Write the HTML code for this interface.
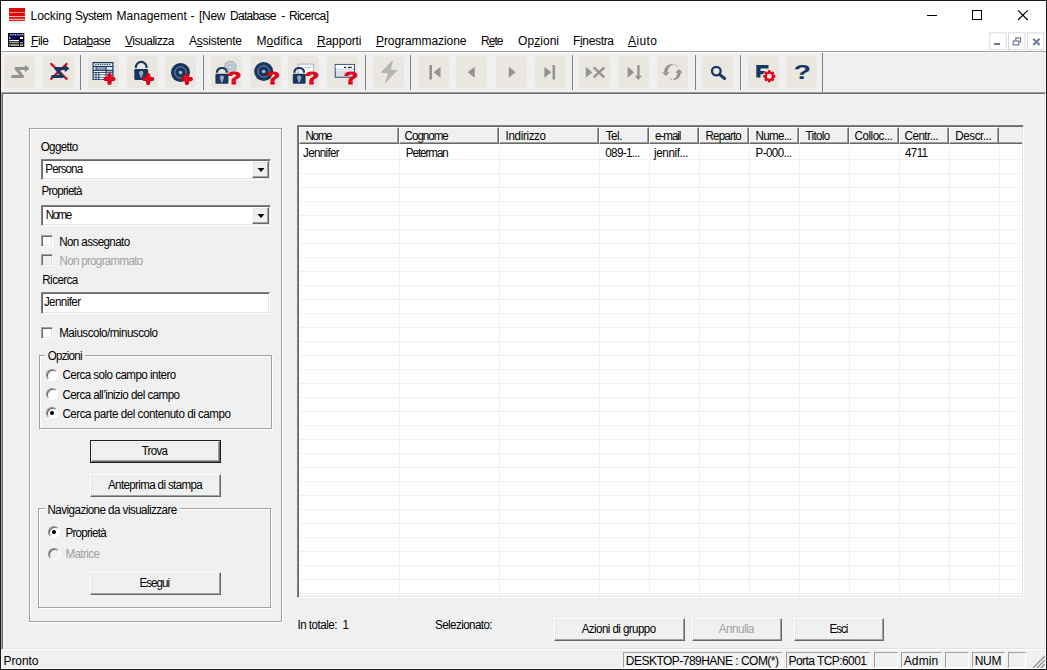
<!DOCTYPE html>
<html><head><meta charset="utf-8">
<style>
*{box-sizing:border-box;margin:0;padding:0}
html,body{width:1047px;height:670px;overflow:hidden;background:#fff}
body{position:relative;font-family:"Liberation Sans",sans-serif;font-size:11px;color:#000}
.a{position:absolute;white-space:pre}
#frame{left:0;top:0;width:1047px;height:670px;border:1px solid #1a1a1a}
u{text-decoration:underline;text-underline-offset:1px}
#tbar{left:1px;top:51px;width:1045px;height:42px;background:#f0f0f0;border-top:1px solid #a0a0a0;box-shadow:inset 0 1px 0 #fafafa}
#tbar2{left:1px;top:53px;width:822px;height:39px;border-right:1px solid #808080}
.tb{top:56px;width:31px;height:32px;background:#e9e7e0;border-radius:4px}
.tb svg{position:absolute;left:0;top:0}
.sep{top:55px;width:1px;height:35px;background:#808080}
#client{left:1px;top:92px;width:1045px;height:558px;background:#f0f0f0;border:1px solid;border-color:#a0a0a0 #fff #fff #a0a0a0;box-shadow:inset 1px 1px 0 #696969,inset -1px -1px 0 #e3e3e3,inset 2px 2px 0 #f8f8f8}
#status{left:1px;top:650px;width:1045px;height:19px;background:#f0f0f0;border-right:1px solid #fff;border-bottom:1px solid #fff}
.grp{border:1px solid #a0a0a0;box-shadow:inset 1px 1px 0 #fff, 1px 1px 0 #fff}
.lblbg{background:#f0f0f0;height:12px}
.sunk{background:#fff;border:1px solid;border-color:#808080 #fff #fff #808080;box-shadow:inset 1px 1px 0 #696969, inset -1px -1px 0 #e3e3e3}
.btn{background:#f0f0f0;border:1px solid;border-color:#fff #696969 #696969 #fff;box-shadow:inset -1px -1px 0 #a0a0a0, inset 1px 1px 0 #e3e3e3}
.chk{width:12px;height:12px;background:#fff;border:1px solid;border-color:#a0a0a0 #fff #fff #a0a0a0;box-shadow:inset 1px 1px 0 #696969, inset -1px -1px 0 #e3e3e3}
.rad{width:11.5px;height:11.5px;border-radius:50%;background:#fff;border:1px solid;border-color:#909090 #fff #fff #909090;box-shadow:inset 1px 1px 0 #696969;transform:rotate(0deg)}
.dot{width:4px;height:4px;border-radius:50%;background:#000}
.sp{top:652px;height:16px;border:1px solid;border-color:#a0a0a0 #fff #fff #a0a0a0}
.hd{top:127px;height:17px;background:#f0f0f0;border:1px solid;border-color:#fff #696969 #696969 #fff;box-shadow:inset -1px -1px 0 #a0a0a0}
</style></head><body>
<div class="a" id="frame"></div>

<svg class="a" style="left:9px;top:8px" width="16" height="13" viewBox="0 0 16 13"><g fill="#de0a0a"><rect x="0" y="0" width="16" height="4.400"/><rect x="0" y="5" width="16" height="3"/><rect x="0" y="8.700" width="16" height="2.100"/><rect x="0" y="11.600" width="16" height="1.300"/></g></svg>
<div class="a" id="title" style="left:30px;top:9px;width:300px;height:14px;font-size:12px;line-height:14px"><span style="position:absolute;left:0.6px;top:0;letter-spacing:-0.063px">Locking </span><span style="position:absolute;left:45.0px;top:0;letter-spacing:-0.543px">System </span><span style="position:absolute;left:86.5px;top:0;letter-spacing:0.028px">Management </span><span style="position:absolute;left:160.6px;top:0;letter-spacing:0.000px">- </span><span style="position:absolute;left:169.1px;top:0;letter-spacing:-0.315px">[New </span><span style="position:absolute;left:200.0px;top:0;letter-spacing:-0.696px">Database </span><span style="position:absolute;left:251.2px;top:0;letter-spacing:0.000px">- </span><span style="position:absolute;left:258.9px;top:0;letter-spacing:-0.559px">Ricerca]</span></div>
<svg class="a" style="left:925px;top:9px" width="110" height="14" viewBox="0 0 110 14"><path d="M2 6.500H12" stroke="#000" stroke-width="1" fill="none"/><rect x="47.500" y="1.500" width="9" height="9" stroke="#000" fill="none"/><path d="M93 1.300L102.700 11M102.700 1.300L93 11" stroke="#000" stroke-width="1.100" fill="none"/></svg>
<svg class="a" style="left:8px;top:33px" width="17" height="14" viewBox="0 0 17 14"><rect x="0" y="0" width="16.300" height="14" fill="#0a0a0a"/><rect x="1" y="1" width="14.300" height="1.300" fill="#fff"/><path d="M1 1.600H15.300" stroke="#1414c8" stroke-width="1.300" stroke-dasharray="1.500 0.800"/><rect x="1.300" y="4" width="1" height="2" fill="#fff"/><rect x="3" y="4" width="8" height="2" fill="#00008b"/><rect x="12" y="4" width="3" height="2" fill="#fff"/><rect x="1.300" y="7" width="9.700" height="1.200" fill="#fff"/><rect x="12" y="7" width="3" height="1.200" fill="#00008b"/><rect x="1.300" y="9.200" width="9.700" height="1" fill="#c8c8c8"/><rect x="12" y="9.200" width="3" height="1" fill="#c8c8c8"/><rect x="1.300" y="11.200" width="1" height="1.800" fill="#fff"/><rect x="3" y="11.200" width="8" height="1.800" fill="#a8a8a8"/><rect x="12" y="11.200" width="3" height="1.800" fill="#a8a8a8"/></svg>
<div class="a" style="left:31.0px;top:34px;font-size:12px;line-height:14px;letter-spacing:-0.448px;"><u>F</u>ile</div>
<div class="a" style="left:63.0px;top:34px;font-size:12px;line-height:14px;letter-spacing:-0.482px;">Data<u>b</u>ase</div>
<div class="a" style="left:125.0px;top:34px;font-size:12px;line-height:14px;letter-spacing:-0.479px;"><u>V</u>isualizza</div>
<div class="a" style="left:189.0px;top:34px;font-size:12px;line-height:14px;letter-spacing:-0.262px;">A<u>s</u>sistente</div>
<div class="a" style="left:256.4px;top:34px;font-size:12px;line-height:14px;letter-spacing:0.173px;">M<u>o</u>difica</div>
<div class="a" style="left:317.0px;top:34px;font-size:12px;line-height:14px;letter-spacing:-0.123px;"><u>R</u>apporti</div>
<div class="a" style="left:376.0px;top:34px;font-size:12px;line-height:14px;letter-spacing:-0.067px;"><u>P</u>rogrammazione</div>
<div class="a" style="left:481.0px;top:34px;font-size:12px;line-height:14px;letter-spacing:-0.953px;">R<u>e</u>te</div>
<div class="a" style="left:518.0px;top:34px;font-size:12px;line-height:14px;letter-spacing:0.052px;">Op<u>z</u>ioni</div>
<div class="a" style="left:573.0px;top:34px;font-size:12px;line-height:14px;letter-spacing:-0.337px;">F<u>i</u>nestra</div>
<div class="a" style="left:628.0px;top:34px;font-size:12px;line-height:14px;letter-spacing:0.410px;"><u>A</u>iuto</div>
<svg class="a" style="left:989px;top:32px" width="57" height="19" viewBox="0 0 57 19"><g fill="#fff" stroke="#dadada" stroke-width="1"><rect x="0.800" y="0.800" width="16.500" height="16.800"/><rect x="19.500" y="0.800" width="16.500" height="16.800"/><rect x="38.300" y="0.800" width="16.500" height="16.800"/></g><path d="M5 12H11" stroke="#6d7c92" stroke-width="2"/><g fill="none" stroke="#6d7c92" stroke-width="1.200"><rect x="24.300" y="9" width="5.600" height="3.800"/><path d="M26.800 8.500V5.900H31.600V10H30.300"/></g><path d="M44.200 6.800L50.600 13M50.600 6.800L44.200 13" stroke="#6d7c92" stroke-width="2"/></svg>
<div class="a" id="tbar"></div><div class="a" id="tbar2"></div>
<div class="a tb" style="left:4px"><svg width="32" height="32" viewBox="0 0 32 32"><path d="M8.5 20.500H18.5L12 12.500H22" stroke="#939391" stroke-width="3" stroke-linecap="round" stroke-linejoin="round" fill="none"/><path d="M20.8 8.800L25.6 12.500L20.8 16.200Z" fill="#939391"/></svg></div>
<div class="a tb" style="left:42.8px"><svg width="32" height="32" viewBox="0 0 32 32"><path d="M7.500 7.300L24.300 23.500M24.300 7.300L7.500 23.500" stroke="#e2001a" stroke-width="2.200" fill="none"/><path d="M9.5 20.500H19.5L13 12.500H23" stroke="#17375e" stroke-width="3" stroke-linecap="round" stroke-linejoin="round" fill="none"/><path d="M21.8 8.800L26.6 12.500L21.8 16.200Z" fill="#17375e"/></svg></div>
<div class="a tb" style="left:87.6px"><svg width="32" height="32" viewBox="0 0 32 32"><rect x="4.500" y="6" width="21" height="18" fill="#17375e"/><rect x="5.700" y="7.300" width="18.600" height="2.600" fill="#fff"/><path d="M7 8.600H23" stroke="#17375e" stroke-width="0.900" stroke-dasharray="1.600 0.700"/><rect x="5.700" y="11" width="1.800" height="2.800" fill="#fff"/><rect x="8.500" y="11" width="9" height="2.800" fill="#8f9bb8"/><rect x="18.600" y="11" width="5.700" height="2.800" fill="#e4e6ee"/><rect x="5.700" y="14.900" width="11.800" height="1" fill="#fff"/><rect x="18.600" y="14.900" width="5.700" height="1" fill="#b9c0d2"/><rect x="5.700" y="16.800" width="1.800" height="1.700" fill="#fff"/><rect x="8.500" y="16.800" width="1.800" height="1.700" fill="#fff"/><rect x="11.300" y="16.800" width="6.200" height="1.700" fill="#fff"/><rect x="18.600" y="16.800" width="5.700" height="1.700" fill="#fff"/><rect x="5.700" y="19.200" width="1.800" height="1.700" fill="#fff"/><rect x="8.500" y="19.200" width="1.800" height="1.700" fill="#fff"/><rect x="11.300" y="19.200" width="6.200" height="1.700" fill="#fff"/><rect x="18.600" y="19.200" width="5.700" height="1.700" fill="#fff"/><rect x="5.700" y="21.600" width="1.800" height="1.600" fill="#fff"/><rect x="8.500" y="21.600" width="1.800" height="1.600" fill="#fff"/><rect x="11.300" y="21.600" width="6.200" height="1.600" fill="#fff"/><path d="M17.6 23H25.4M21.5 19.1V26.9" stroke="#b40016" stroke-width="4.200" stroke-linecap="round" fill="none"/><path d="M17.6 23H25.4M21.5 19.1V26.9" stroke="#e2001a" stroke-width="3.300" stroke-linecap="round" fill="none"/></svg></div>
<div class="a tb" style="left:126.7px"><svg width="32" height="32" viewBox="0 0 32 32"><path d="M8.85 12.00V11.20A5.35 5.35 0 0 1 19.55 11.20V12.00" stroke="#17375e" stroke-width="2.1" fill="none"/><rect x="7.3" y="13" width="13.80" height="10.90" rx="1.2" fill="#17375e"/><circle cx="14.20" cy="17" r="2.2" fill="#9aa7c0"/><path d="M13.00 18H15.40L15.20 21.4H13.20Z" fill="#9aa7c0"/><path d="M17.3 23H25.099999999999998M21.2 19.1V26.9" stroke="#b40016" stroke-width="4.200" stroke-linecap="round" fill="none"/><path d="M17.3 23H25.099999999999998M21.2 19.1V26.9" stroke="#e2001a" stroke-width="3.300" stroke-linecap="round" fill="none"/></svg></div>
<div class="a tb" style="left:165px"><svg width="32" height="32" viewBox="0 0 32 32"><circle cx="15.5" cy="16.5" r="9.5" fill="#17375e"/><circle cx="15.5" cy="16.5" r="5.70" fill="none" stroke="#8fa3c4" stroke-width="0.8"/><circle cx="15.5" cy="16.5" r="1.80" fill="#a9b4cc"/><path d="M18.0 23.1H25.799999999999997M21.9 19.200000000000003V27.0" stroke="#b40016" stroke-width="4.200" stroke-linecap="round" fill="none"/><path d="M18.0 23.1H25.799999999999997M21.9 19.200000000000003V27.0" stroke="#e2001a" stroke-width="3.300" stroke-linecap="round" fill="none"/></svg></div>
<div class="a tb" style="left:210.5px"><svg width="32" height="32" viewBox="0 0 32 32"><circle cx="19.3" cy="10.9" r="6.5" fill="#b6bdc7"/><circle cx="19.3" cy="10.9" r="3.90" fill="none" stroke="#dde0e5" stroke-width="0.8"/><circle cx="19.3" cy="10.9" r="1.24" fill="#dde0e5"/><path d="M6.00 16.80V16.00A4.90 4.00 0 0 1 15.80 16.00V16.80" stroke="#17375e" stroke-width="2.2" fill="none"/><rect x="4.4" y="17.8" width="13.00" height="9.90" rx="1.2" fill="#17375e"/><circle cx="10.90" cy="21.8" r="2.2" fill="#9aa7c0"/><path d="M9.70 22.8H12.10L11.90 26.200000000000003H9.90Z" fill="#9aa7c0"/><text x="0" y="0" transform="translate(16.3 27.6) scale(1.32 1)" font-family="Liberation Sans, sans-serif" font-weight="bold" font-size="17.4" fill="#e2001a" stroke="#e2001a" stroke-width="0.9">?</text></svg></div>
<div class="a tb" style="left:249.7px"><svg width="32" height="32" viewBox="0 0 32 32"><circle cx="13.7" cy="15.5" r="9.5" fill="#17375e"/><circle cx="13.7" cy="15.5" r="5.70" fill="none" stroke="#8fa3c4" stroke-width="0.8"/><circle cx="13.7" cy="15.5" r="1.80" fill="#a9b4cc"/><text x="0" y="0" transform="translate(16.1 27.6) scale(1.32 1)" font-family="Liberation Sans, sans-serif" font-weight="bold" font-size="17.4" fill="#e2001a" stroke="#e2001a" stroke-width="0.9">?</text></svg></div>
<div class="a tb" style="left:288.2px"><svg width="32" height="32" viewBox="0 0 32 32"><rect x="10.200" y="8.100" width="15.500" height="11" fill="#f6f6f6" stroke="#8fa3c8" stroke-width="0.800"/><path d="M17 11.500H18M19 11.500H22.500" stroke="#8fa3c8" stroke-width="0.800"/><path d="M6.40 16.80V16.00A4.80 4.00 0 0 1 16.00 16.00V16.80" stroke="#17375e" stroke-width="2.2" fill="none"/><rect x="4.8" y="17.8" width="12.80" height="9.90" rx="1.2" fill="#17375e"/><circle cx="11.20" cy="21.8" r="2.2" fill="#9aa7c0"/><path d="M10.00 22.8H12.40L12.20 26.200000000000003H10.20Z" fill="#9aa7c0"/><text x="0" y="0" transform="translate(17.0 27.6) scale(1.32 1)" font-family="Liberation Sans, sans-serif" font-weight="bold" font-size="17.4" fill="#e2001a" stroke="#e2001a" stroke-width="0.9">?</text></svg></div>
<div class="a tb" style="left:327.2px"><svg width="32" height="32" viewBox="0 0 32 32"><rect x="8.200" y="8.400" width="19.200" height="12.800" fill="#d9dfea" stroke="#17375e" stroke-width="0.900"/><rect x="8.700" y="8.900" width="18.200" height="3.400" fill="#fff"/><rect x="8.700" y="14" width="18.200" height="0.800" fill="#eef1f6"/><path d="M17 11.400H19.200M21 11.400H24.600" stroke="#111" stroke-width="1.200"/><text x="0" y="0" transform="translate(16.9 27.6) scale(1.32 1)" font-family="Liberation Sans, sans-serif" font-weight="bold" font-size="17.4" fill="#e2001a" stroke="#e2001a" stroke-width="0.9">?</text></svg></div>
<div class="a tb" style="left:372.5px"><svg width="32" height="32" viewBox="0 0 32 32"><path d="M20.200 3.600L7.500 16.500L15 17.500L11.800 27.700L24.500 14.300L17.800 13.500Z" fill="#b4b4b2"/></svg></div>
<div class="a tb" style="left:417.6px"><svg width="32" height="32" viewBox="0 0 32 32"><rect x="11.400" y="9" width="2.600" height="14.500" fill="#939391"/><path d="M15.7 16.200L22.5 10.700V21.700Z" fill="#939391"/></svg></div>
<div class="a tb" style="left:456.3px"><svg width="32" height="32" viewBox="0 0 32 32"><path d="M11.5 16.200L18.7 10.700V21.700Z" fill="#939391"/></svg></div>
<div class="a tb" style="left:495.5px"><svg width="32" height="32" viewBox="0 0 32 32"><path d="M19.6 16.200L12.8 10.700V21.700Z" fill="#939391"/></svg></div>
<div class="a tb" style="left:534.8px"><svg width="32" height="32" viewBox="0 0 32 32"><path d="M16.3 16.200L9.4 10.700V21.700Z" fill="#939391"/><rect x="17.500" y="9" width="2.600" height="14.500" fill="#939391"/></svg></div>
<div class="a tb" style="left:579.4px"><svg width="32" height="32" viewBox="0 0 32 32"><path d="M13.3 16.200L6.8 10.700V21.700Z" fill="#939391"/><path d="M14.800 11.300L25.300 21.300M25.300 11.300L14.800 21.300" stroke="#939391" stroke-width="2.300" fill="none"/></svg></div>
<div class="a tb" style="left:618.4px"><svg width="32" height="32" viewBox="0 0 32 32"><path d="M16.2 16.200L9.7 10.700V21.700Z" fill="#939391"/><rect x="19.300" y="9" width="2.300" height="12" fill="#939391"/><path d="M16.600 19.800H24.000L20.300 24Z" fill="#939391"/></svg></div>
<div class="a tb" style="left:657.2px"><svg width="32" height="32" viewBox="0 0 32 32"><path d="M16 8C10.500 8 7.200 11.500 7.200 16.400H10.600C10.600 12.600 12.500 9.600 16 9.100Z" fill="#939391"/><path d="M5.200 16.200H12.600L8.900 19.900Z" fill="#939391"/><path d="M16.300 23.900C21.500 23.900 23.900 20.500 23.700 16.600H20.300C20.300 20 19 22.300 16.300 22.900Z" fill="#939391"/><path d="M18.300 16.800H25.700L22 13Z" fill="#939391"/><path d="M17 8.300C19 8.600 20.300 9.600 21 11" stroke="#939391" stroke-width="1" stroke-dasharray="1 1" fill="none"/><path d="M15 23.500C13.500 23.200 12.300 22.300 11.600 21.200" stroke="#939391" stroke-width="1" stroke-dasharray="1 1" fill="none"/></svg></div>
<div class="a tb" style="left:702.2px"><svg width="32" height="32" viewBox="0 0 32 32"><circle cx="14.300" cy="15.100" r="4.300" fill="none" stroke="#17375e" stroke-width="2.300"/><path d="M17.800 18.600L22.600 22.500" stroke="#17375e" stroke-width="3" stroke-linecap="round"/></svg></div>
<div class="a tb" style="left:747.8px"><svg width="32" height="32" viewBox="0 0 32 32"><path d="M8.300 9H20.500V12.600H12.500V15H17.200V18.300H12.500V21.600H8.300Z" fill="#17375e"/><circle cx="21.300" cy="20.300" r="6.600" fill="#e9e7e0"/><path d="M27.25 18.97L27.25 21.63L25.18 21.90L25.18 21.92L26.45 23.57L24.57 25.45L22.92 24.18L22.90 24.18L22.63 26.25L19.97 26.25L19.70 24.18L19.68 24.18L18.03 25.45L16.15 23.57L17.42 21.92L17.42 21.90L15.35 21.63L15.35 18.97L17.42 18.70L17.42 18.68L16.15 17.03L18.03 15.15L19.68 16.42L19.70 16.42L19.97 14.35L22.63 14.35L22.90 16.42L22.92 16.42L24.57 15.15L26.45 17.03L25.18 18.68L25.18 18.70ZM23.8 20.3A2.5 2.5 0 1 0 18.8 20.3A2.5 2.5 0 1 0 23.8 20.3Z" fill="#e2001a" fill-rule="evenodd"/></svg></div>
<div class="a tb" style="left:786.4px"><svg width="32" height="32" viewBox="0 0 32 32"><text x="0" y="0" transform="translate(7.6 23.1) scale(1.46 1)" font-family="Liberation Sans, sans-serif" font-weight="bold" font-size="19.6" fill="#17375e" stroke="#17375e" stroke-width="0">?</text></svg></div>
<div class="a sep" style="left:80px"></div>
<div class="a sep" style="left:203px"></div>
<div class="a sep" style="left:365px"></div>
<div class="a sep" style="left:410px"></div>
<div class="a sep" style="left:572px"></div>
<div class="a sep" style="left:695px"></div>
<div class="a sep" style="left:740px"></div>
<div class="a" id="client"></div>
<div class="a grp" style="left:29px;top:128px;width:253px;height:494px"></div>
<div class="a" style="left:40.7px;top:140px;font-size:11.6px;line-height:14px;letter-spacing:-0.611px;transform:scaleY(1.07);transform-origin:0 10.6px;">Oggetto</div>
<div class="a sunk" style="left:41px;top:159px;width:230px;height:21px"></div>
<div class="a btn" style="left:252px;top:161px;width:17px;height:17px"></div>
<svg class="a" style="left:256.500px;top:167.5px" width="8" height="4" viewBox="0 0 8 4"><path d="M0.500 0H7.500L4 4Z" fill="#000"/></svg>
<div class="a" style="left:45.3px;top:162px;font-size:11.6px;line-height:14px;letter-spacing:-0.898px;transform:scaleY(1.07);transform-origin:0 11.5px;">Persona</div>
<div class="a" style="left:41.5px;top:184px;font-size:11.6px;line-height:14px;letter-spacing:-0.756px;transform:scaleY(1.07);transform-origin:0 11.5px;">Proprietà</div>
<div class="a sunk" style="left:41px;top:205px;width:230px;height:21px"></div>
<div class="a btn" style="left:252px;top:207px;width:17px;height:17px"></div>
<svg class="a" style="left:256.500px;top:213.5px" width="8" height="4" viewBox="0 0 8 4"><path d="M0.500 0H7.500L4 4Z" fill="#000"/></svg>
<div class="a" style="left:45.8px;top:208px;font-size:11.6px;line-height:14px;letter-spacing:-1.512px;transform:scaleY(1.07);transform-origin:0 11.4px;">Nome</div>
<div class="a chk" style="left:41px;top:235px"></div>
<div class="a" style="left:59.2px;top:235px;font-size:11.6px;line-height:14px;letter-spacing:-0.583px;transform:scaleY(1.07);transform-origin:0 10.8px;">Non assegnato</div>
<div class="a chk" style="left:41px;top:254px;background:#f0f0f0"></div>
<div class="a" style="left:59.5px;top:254px;font-size:11.6px;line-height:14px;letter-spacing:-0.696px;color:#a0a0a0;transform:scaleY(1.07);transform-origin:0 10.9px;">Non programmato</div>
<div class="a" style="left:42.3px;top:273px;font-size:11.6px;line-height:14px;letter-spacing:-0.552px;transform:scaleY(1.07);transform-origin:0 10.6px;">Ricerca</div>
<div class="a sunk" style="left:41px;top:292px;width:229px;height:22px"></div>
<div class="a" style="left:43.9px;top:295px;font-size:11.6px;line-height:14px;letter-spacing:-0.579px;transform:scaleY(1.07);transform-origin:0 11.0px;">Jennifer</div>
<div class="a chk" style="left:41px;top:327px"></div>
<div class="a" style="left:59.2px;top:326px;font-size:11.6px;line-height:14px;letter-spacing:-0.490px;transform:scaleY(1.07);transform-origin:0 11.0px;">Maiuscolo/minuscolo</div>
<div class="a grp" style="left:39px;top:355px;width:233px;height:74px"></div>
<div class="a lblbg" style="left:45px;top:350px;width:40px"></div>
<div class="a" style="left:47.7px;top:349px;font-size:11.6px;line-height:14px;letter-spacing:-0.735px;transform:scaleY(1.07);transform-origin:0 10.7px;">Opzioni</div>
<div class="a rad" style="left:46px;top:369px"></div>
<div class="a" style="left:62.4px;top:368px;font-size:11.6px;line-height:14px;letter-spacing:-0.535px;transform:scaleY(1.07);transform-origin:0 10.8px;">Cerca solo campo intero</div>
<div class="a rad" style="left:46px;top:388px"></div>
<div class="a" style="left:62.4px;top:388px;font-size:11.6px;line-height:14px;letter-spacing:-0.555px;transform:scaleY(1.07);transform-origin:0 11.0px;">Cerca all’inizio del campo</div>
<div class="a rad" style="left:46px;top:407px"></div>
<div class="a" style="left:62.4px;top:407px;font-size:11.6px;line-height:14px;letter-spacing:-0.457px;transform:scaleY(1.07);transform-origin:0 10.7px;">Cerca parte del contenuto di campo</div>
<div class="a dot" style="left:50px;top:411px"></div>
<div class="a" style="left:90px;top:440px;width:131px;height:23px;border:1px solid #1c1c1c"></div><div class="a btn" style="left:91px;top:441px;width:129px;height:21px"></div>
<div class="a" style="left:141.7px;top:444px;font-size:11.6px;line-height:14px;letter-spacing:-0.730px;transform:scaleY(1.07);transform-origin:0 10.6px;">Trova</div>
<div class="a btn" style="left:90px;top:474px;width:131px;height:23px"></div>
<div class="a" style="left:108.0px;top:478px;font-size:11.6px;line-height:14px;letter-spacing:-0.646px;transform:scaleY(1.07);transform-origin:0 11.1px;">Anteprima di stampa</div>
<div class="a grp" style="left:38px;top:508px;width:233px;height:100px"></div>
<div class="a lblbg" style="left:45px;top:504px;width:135px"></div>
<div class="a" style="left:47.5px;top:503px;font-size:11.6px;line-height:14px;letter-spacing:-0.535px;transform:scaleY(1.07);transform-origin:0 10.6px;">Navigazione da visualizzare</div>
<div class="a rad" style="left:48px;top:526px"></div><div class="a dot" style="left:52px;top:530px"></div>
<div class="a" style="left:65.4px;top:526px;font-size:11.6px;line-height:14px;letter-spacing:-0.731px;transform:scaleY(1.07);transform-origin:0 10.6px;">Proprietà</div>
<div class="a rad" style="left:48px;top:548px;background:#f0f0f0"></div>
<div class="a" style="left:65.4px;top:547px;font-size:11.6px;line-height:14px;letter-spacing:-0.569px;color:#a0a0a0;transform:scaleY(1.07);transform-origin:0 11.4px;">Matrice</div>
<div class="a btn" style="left:90px;top:572px;width:131px;height:23px"></div>
<div class="a" style="left:139.4px;top:576px;font-size:11.6px;line-height:14px;letter-spacing:-0.951px;transform:scaleY(1.07);transform-origin:0 10.7px;">Esegui</div>
<div class="a sunk" style="left:297px;top:125px;width:727px;height:473px"></div>
<div class="a" style="left:299px;top:127px;width:723px;height:17px;background:#f0f0f0;border-bottom:1px solid #696969;box-shadow:inset 0 -2px 0 -1px #a0a0a0"></div>
<div class="a" style="left:299px;top:146px;width:723px;height:450px;background:linear-gradient(#f0f0f0,#f0f0f0) 100px 0/1px 100% no-repeat,linear-gradient(#f0f0f0,#f0f0f0) 200px 0/1px 100% no-repeat,linear-gradient(#f0f0f0,#f0f0f0) 300px 0/1px 100% no-repeat,linear-gradient(#f0f0f0,#f0f0f0) 350px 0/1px 100% no-repeat,linear-gradient(#f0f0f0,#f0f0f0) 400px 0/1px 100% no-repeat,linear-gradient(#f0f0f0,#f0f0f0) 450px 0/1px 100% no-repeat,linear-gradient(#f0f0f0,#f0f0f0) 500px 0/1px 100% no-repeat,linear-gradient(#f0f0f0,#f0f0f0) 550px 0/1px 100% no-repeat,linear-gradient(#f0f0f0,#f0f0f0) 600px 0/1px 100% no-repeat,linear-gradient(#f0f0f0,#f0f0f0) 650px 0/1px 100% no-repeat,linear-gradient(#f0f0f0,#f0f0f0) 700px 0/1px 100% no-repeat,repeating-linear-gradient(to bottom,transparent 0,transparent 13px,#f0f0f0 13px,#f0f0f0 14px);"></div>
<div class="a hd" style="left:299px;width:100px"></div>
<div class="a" style="left:305.5px;top:129px;font-size:11.6px;line-height:14px;letter-spacing:-1.312px;transform:scaleY(1.07);transform-origin:0 10.6px;">Nome</div>
<div class="a hd" style="left:399px;width:100px"></div>
<div class="a" style="left:404.6px;top:129px;font-size:11.6px;line-height:14px;letter-spacing:-1.014px;transform:scaleY(1.07);transform-origin:0 10.6px;">Cognome</div>
<div class="a hd" style="left:499px;width:100px"></div>
<div class="a" style="left:505.6px;top:129px;font-size:11.6px;line-height:14px;letter-spacing:-0.346px;transform:scaleY(1.07);transform-origin:0 10.6px;">Indirizzo</div>
<div class="a hd" style="left:599px;width:50px"></div>
<div class="a" style="left:605.7px;top:129px;font-size:11.6px;line-height:14px;letter-spacing:-0.449px;transform:scaleY(1.07);transform-origin:0 10.6px;">Tel.</div>
<div class="a hd" style="left:649px;width:50px"></div>
<div class="a" style="left:655.1px;top:129px;font-size:11.6px;line-height:14px;letter-spacing:-1.056px;transform:scaleY(1.07);transform-origin:0 10.6px;">e-mail</div>
<div class="a hd" style="left:699px;width:50px"></div>
<div class="a" style="left:705.5px;top:129px;font-size:11.6px;line-height:14px;letter-spacing:-0.825px;transform:scaleY(1.07);transform-origin:0 10.6px;">Reparto</div>
<div class="a hd" style="left:749px;width:50px"></div>
<div class="a" style="left:755.6px;top:129px;font-size:11.6px;line-height:14px;letter-spacing:-0.699px;transform:scaleY(1.07);transform-origin:0 10.6px;">Nume...</div>
<div class="a hd" style="left:799px;width:50px"></div>
<div class="a" style="left:805.5px;top:129px;font-size:11.6px;line-height:14px;letter-spacing:-0.664px;transform:scaleY(1.07);transform-origin:0 10.6px;">Titolo</div>
<div class="a hd" style="left:849px;width:50px"></div>
<div class="a" style="left:854.5px;top:129px;font-size:11.6px;line-height:14px;letter-spacing:-0.461px;transform:scaleY(1.07);transform-origin:0 10.6px;">Colloc...</div>
<div class="a hd" style="left:899px;width:50px"></div>
<div class="a" style="left:904.6px;top:129px;font-size:11.6px;line-height:14px;letter-spacing:-0.496px;transform:scaleY(1.07);transform-origin:0 10.6px;">Centr...</div>
<div class="a hd" style="left:949px;width:50px"></div>
<div class="a" style="left:955.2px;top:129px;font-size:11.6px;line-height:14px;letter-spacing:-0.388px;transform:scaleY(1.07);transform-origin:0 10.6px;">Descr...</div>
<div class="a" style="left:303.1px;top:146px;font-size:11.6px;line-height:14px;letter-spacing:-0.664px;transform:scaleY(1.07);transform-origin:0 11.0px;">Jennifer</div>
<div class="a" style="left:405.8px;top:146px;font-size:11.6px;line-height:14px;letter-spacing:-1.038px;transform:scaleY(1.07);transform-origin:0 11.0px;">Peterman</div>
<div class="a" style="left:605.2px;top:146px;font-size:11.6px;line-height:14px;letter-spacing:-0.604px;transform:scaleY(1.07);transform-origin:0 11.0px;">089-1...</div>
<div class="a" style="left:654.1px;top:146px;font-size:11.6px;line-height:14px;letter-spacing:-0.374px;transform:scaleY(1.07);transform-origin:0 11.0px;">jennif...</div>
<div class="a" style="left:755.6px;top:146px;font-size:11.6px;line-height:14px;letter-spacing:-0.601px;transform:scaleY(1.07);transform-origin:0 11.0px;">P-000...</div>
<div class="a" style="left:905.1px;top:146px;font-size:11.6px;line-height:14px;letter-spacing:-0.679px;transform:scaleY(1.07);transform-origin:0 11.0px;">4711</div>
<div class="a" style="left:297.4px;top:618px;font-size:11.6px;line-height:14px;letter-spacing:-0.481px;transform:scaleY(1.07);transform-origin:0 11.5px;">In totale:  1</div>
<div class="a" style="left:435.0px;top:618px;font-size:11.6px;line-height:14px;letter-spacing:-0.565px;transform:scaleY(1.07);transform-origin:0 11.5px;">Selezionato:</div>
<div class="a btn" style="left:554px;top:618px;width:131px;height:23px"></div>
<div class="a" style="left:581.7px;top:622px;font-size:11.6px;line-height:14px;letter-spacing:-0.577px;transform:scaleY(1.07);transform-origin:0 10.7px;">Azioni di gruppo</div>
<div class="a btn" style="left:692px;top:618px;width:90px;height:23px"></div>
<div class="a" style="left:718.8px;top:622px;font-size:11.6px;line-height:14px;letter-spacing:-0.498px;color:#a0a0a0;transform:scaleY(1.07);transform-origin:0 10.7px;">Annulla</div>
<div class="a btn" style="left:794px;top:618px;width:90px;height:23px"></div>
<div class="a" style="left:829.5px;top:622px;font-size:11.6px;line-height:14px;letter-spacing:-1.002px;transform:scaleY(1.07);transform-origin:0 10.7px;">Esci</div>
<div class="a" id="status"></div>
<div class="a" style="left:3.5px;top:654px;font-size:12px;line-height:14px;letter-spacing:-0.092px;">Pronto</div>
<div class="a sp" style="left:623px;width:160px"></div>
<div class="a" style="left:625.8px;top:654px;font-size:12px;line-height:14px;letter-spacing:-0.520px;">DESKTOP-789HANE : COM(*)</div>
<div class="a sp" style="left:786px;width:85px"></div>
<div class="a" style="left:788.6px;top:654px;font-size:12px;line-height:14px;letter-spacing:-0.579px;">Porta TCP:6001</div>
<div class="a sp" style="left:874px;width:24px"></div>
<div class="a sp" style="left:901px;width:41px"></div>
<div class="a" style="left:903.7px;top:654px;font-size:12px;line-height:14px;letter-spacing:0.146px;">Admin</div>
<div class="a sp" style="left:945px;width:24px"></div>
<div class="a sp" style="left:972px;width:33px"></div>
<div class="a" style="left:974.7px;top:654px;font-size:12px;line-height:14px;letter-spacing:-0.314px;">NUM</div>
<div class="a sp" style="left:1008px;width:18px"></div>
<svg class="a" style="left:1032px;top:655px" width="13" height="13" viewBox="0 0 13 13"><path d="M13 2L2 13M13 6L6 13M13 10L10 13" stroke="#fff" stroke-width="1.200"/><path d="M13 1L1 13M13 5L5 13M13 9L9 13" stroke="#8c8c8c" stroke-width="1.300"/></svg>
</body></html>
